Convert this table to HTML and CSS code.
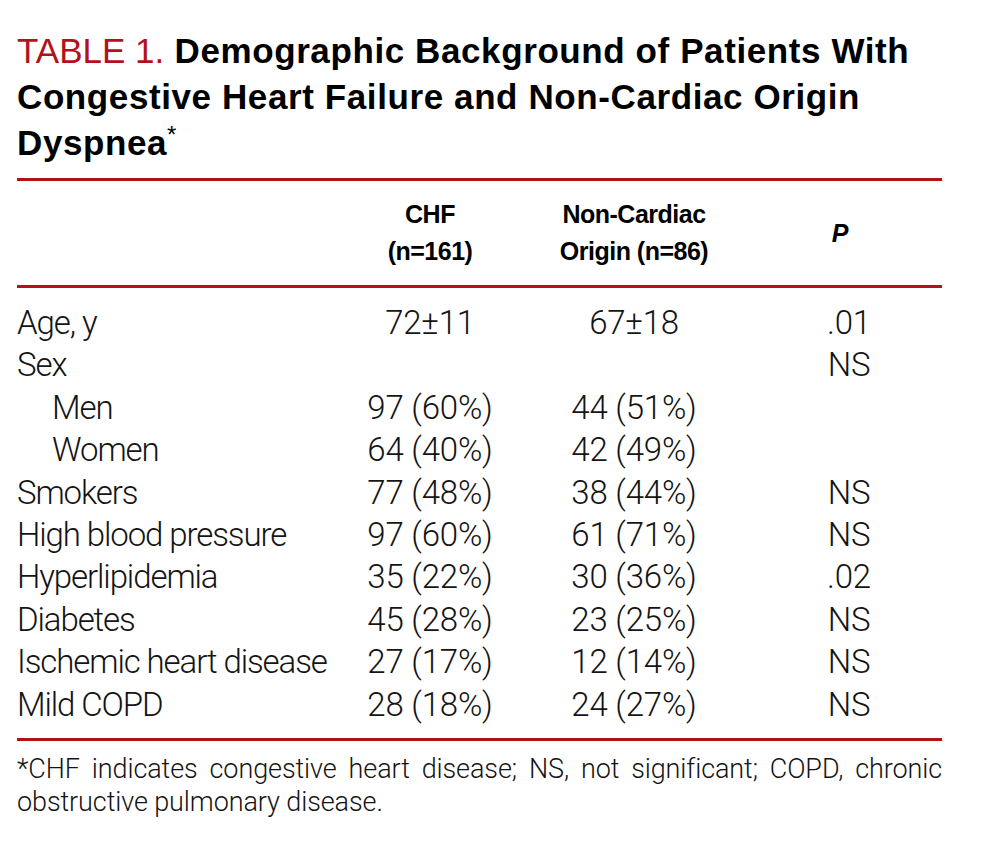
FILE: index.html
```html
<!DOCTYPE html>
<html lang="en">
<head>
<meta charset="utf-8">
<title>Table 1</title>
<link rel="stylesheet" href="styles.css">
</head>
<body>
<div class="page">
  <h1 class="title"><span class="label">TABLE 1.</span> Demographic Background of Patients With Congestive Heart Failure and Non-Cardiac Origin Dyspnea<sup class="star">*</sup></h1>
  <div class="table">
    <div class="row head">
      <div class="cell"></div>
      <div class="cell num">CHF<br>(n=161)</div>
      <div class="cell num">Non-Cardiac<br>Origin (n=86)</div>
      <div class="cell num"><i>P</i></div>
    </div>
    <div class="body">
      <div class="row"><div class="cell name">Age, y</div><div class="cell num">72±11</div><div class="cell num">67±18</div><div class="cell pv">.01</div></div>
      <div class="row"><div class="cell name">Sex</div><div class="cell num"></div><div class="cell num"></div><div class="cell pv">NS</div></div>
      <div class="row"><div class="cell name sub">Men</div><div class="cell num">97 (60%)</div><div class="cell num">44 (51%)</div><div class="cell pv"></div></div>
      <div class="row"><div class="cell name sub">Women</div><div class="cell num">64 (40%)</div><div class="cell num">42 (49%)</div><div class="cell pv"></div></div>
      <div class="row"><div class="cell name">Smokers</div><div class="cell num">77 (48%)</div><div class="cell num">38 (44%)</div><div class="cell pv">NS</div></div>
      <div class="row"><div class="cell name">High blood pressure</div><div class="cell num">97 (60%)</div><div class="cell num">61 (71%)</div><div class="cell pv">NS</div></div>
      <div class="row"><div class="cell name">Hyperlipidemia</div><div class="cell num">35 (22%)</div><div class="cell num">30 (36%)</div><div class="cell pv">.02</div></div>
      <div class="row"><div class="cell name">Diabetes</div><div class="cell num">45 (28%)</div><div class="cell num">23 (25%)</div><div class="cell pv">NS</div></div>
      <div class="row"><div class="cell name">Ischemic heart disease</div><div class="cell num">27 (17%)</div><div class="cell num">12 (14%)</div><div class="cell pv">NS</div></div>
      <div class="row"><div class="cell name">Mild COPD</div><div class="cell num">28 (18%)</div><div class="cell num">24 (27%)</div><div class="cell pv">NS</div></div>
    </div>
  </div>
  <p class="note">*CHF indicates congestive heart disease; NS, not significant; COPD, chronic obstructive pulmonary disease.</p>
</div>
</body>
</html>
```

FILE: styles.css
```css
html, body {
  margin: 0;
  padding: 0;
  background: #ffffff;
}

.page {
  width: 925px;
  padding: 28px 0 0 17px;
  color: #141414;
  font-family: "Liberation Sans", Arial, sans-serif;
}

.title {
  margin: 0;
  font-size: 35px;
  line-height: 46px;
  font-weight: 700;
  letter-spacing: 0.6px;
  color: #000000;
}

.title .label {
  font-weight: 400;
  letter-spacing: 0;
  color: #b3121c;
}

.title .star {
  font-weight: 400;
  font-size: 24px;
  line-height: 0;
  vertical-align: 12px;
}

.table {
  margin-top: 12px;
  border-top: 3px solid #b3121c;
  border-bottom: 3px solid #b3121c;
}

.row {
  display: grid;
  grid-template-columns: 313px 200px 208px 1fr;
  align-items: center;
  white-space: nowrap;
}

.head {
  padding: 15px 0;
  border-bottom: 3px solid #b3121c;
  font-size: 25px;
  line-height: 37px;
  font-weight: 700;
  letter-spacing: -0.5px;
  color: #000000;
}

.head i {
  letter-spacing: 0;
}

.body {
  padding: 14px 0 12px;
  font-family: Roboto, "Liberation Sans", sans-serif;
  font-weight: 300;
  font-size: 33px;
  line-height: 42.4px;
  letter-spacing: -0.2px;
}

.body .name {
  letter-spacing: -1.1px;
}

.num {
  text-align: center;
}

.pv {
  text-align: center;
  padding-left: 18px;
}

.sub {
  padding-left: 35px;
}

.note {
  margin: 12px 0 0;
  font-family: Roboto, "Liberation Sans", sans-serif;
  font-weight: 300;
  font-size: 27px;
  line-height: 32.5px;
  letter-spacing: -0.1px;
  text-align: justify;
}
```
